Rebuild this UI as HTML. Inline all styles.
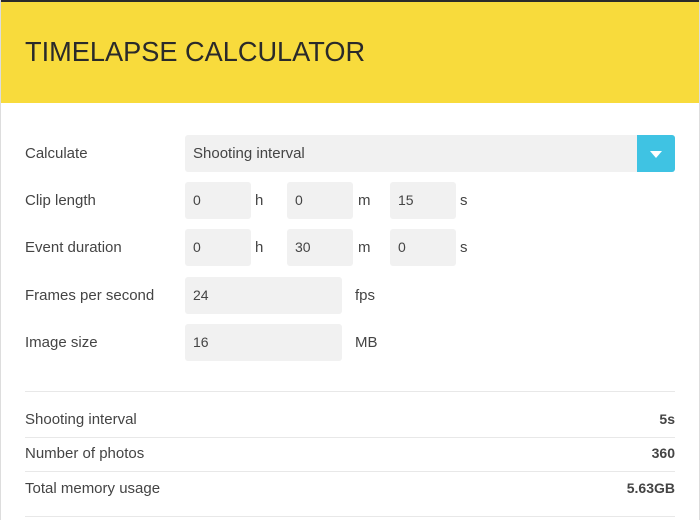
<!DOCTYPE html>
<html><head><style>
*{margin:0;padding:0;box-sizing:border-box}
body{width:700px;height:520px;background:#fff;font-family:"Liberation Sans",sans-serif;color:#333;position:relative;overflow:hidden}
.bl{position:absolute;left:0;top:0;width:1px;height:520px;background:#ddd}
.br{position:absolute;right:0;top:0;width:1px;height:520px;background:#ddd}
.top{position:absolute;left:0;top:0;width:700px;height:2px;background:#2a2a2a}
.hdr{position:absolute;left:0;top:2px;width:700px;height:101px;background:#f8db3c}
.hdr h1{position:absolute;left:25px;top:34px;font-size:28px;color:#2a2a2a;font-weight:normal;transform:scaleX(0.97);transform-origin:left;white-space:nowrap}
.lbl{position:absolute;left:25px;font-size:15px;color:#444}
.in{position:absolute;background:#f1f1f1;border-radius:3px;height:37px;font-size:14px;color:#444;padding-left:8px;line-height:37px}
.u{position:absolute;font-size:15px;color:#444}
.sel-btn{position:absolute;left:637px;top:135px;width:38px;height:37px;background:#3fc3e3;border-radius:0 3px 3px 0}
.line{position:absolute;left:25px;width:650px;height:1px;background:#e8e8e8}
.r{position:absolute;left:25px;width:650px;font-size:15px;color:#444}
.r b{position:absolute;right:0;top:0;font-size:14px;color:#444}
</style></head><body>
<div class="top"></div>
<div class="hdr"><h1>TIMELAPSE CALCULATOR</h1></div>
<div class="bl"></div><div class="br"></div>

<div class="lbl" style="top:145px">Calculate</div>
<div class="in" style="left:185px;top:135px;width:490px;font-size:15px">Shooting interval</div>
<div class="sel-btn"><svg width="38" height="37"><path d="M13 16 L25 16 L19 23 Z" fill="#fff"/></svg></div>

<div class="lbl" style="top:192px">Clip length</div>
<div class="in" style="left:185px;top:182px;width:66px">0</div><div class="u" style="left:255px;top:192px">h</div>
<div class="in" style="left:287px;top:182px;width:66px">0</div><div class="u" style="left:358px;top:192px">m</div>
<div class="in" style="left:390px;top:182px;width:66px">15</div><div class="u" style="left:460px;top:192px">s</div>

<div class="lbl" style="top:239px">Event duration</div>
<div class="in" style="left:185px;top:229px;width:66px">0</div><div class="u" style="left:255px;top:239px">h</div>
<div class="in" style="left:287px;top:229px;width:66px">30</div><div class="u" style="left:358px;top:239px">m</div>
<div class="in" style="left:390px;top:229px;width:66px">0</div><div class="u" style="left:460px;top:239px">s</div>

<div class="lbl" style="top:287px">Frames per second</div>
<div class="in" style="left:185px;top:277px;width:157px">24</div><div class="u" style="left:355px;top:287px">fps</div>

<div class="lbl" style="top:334px">Image size</div>
<div class="in" style="left:185px;top:324px;width:157px">16</div><div class="u" style="left:355px;top:334px">MB</div>

<div class="line" style="top:391px"></div>
<div class="r" style="top:411px">Shooting interval<b>5s</b></div>
<div class="line" style="top:437px"></div>
<div class="r" style="top:445px">Number of photos<b>360</b></div>
<div class="line" style="top:471px"></div>
<div class="r" style="top:480px">Total memory usage<b>5.63GB</b></div>
<div class="line" style="top:516px"></div>
</body></html>
